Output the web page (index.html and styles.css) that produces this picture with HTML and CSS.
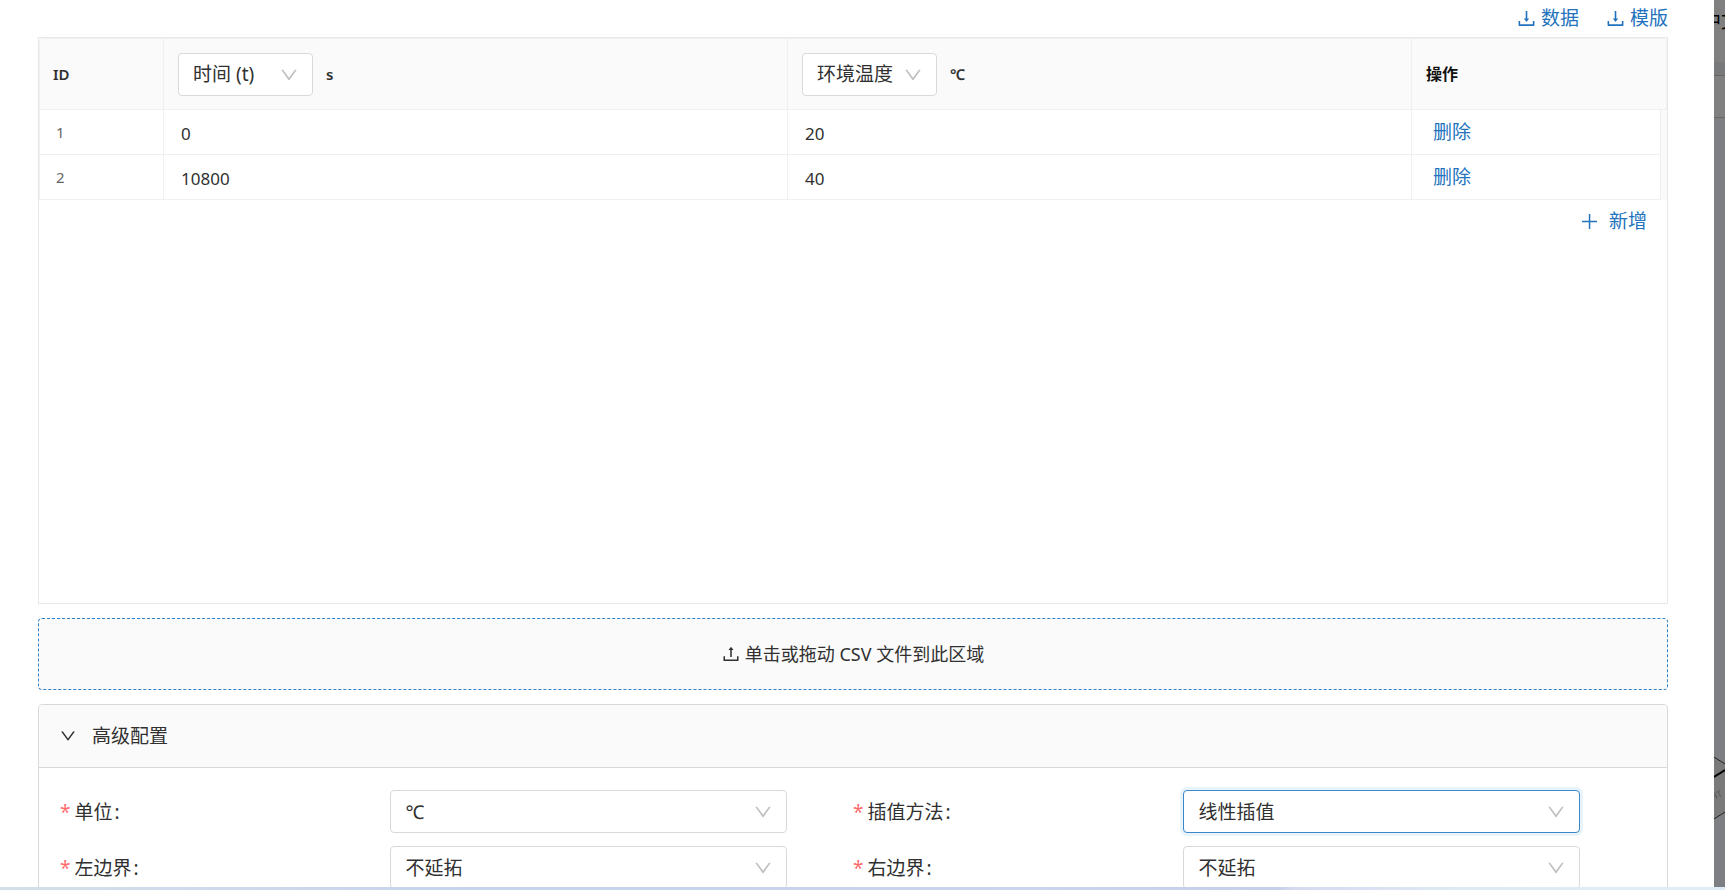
FILE: index.html
```html
<!DOCTYPE html>
<html lang="zh-CN">
<head>
<meta charset="utf-8">
<title>环境温度</title>
<link rel="stylesheet" href="styles.css">
</head>
<body>
<svg class="defs" aria-hidden="true">
  <symbol id="download" viewBox="64 64 896 896"><path d="M505.7 661a8 8 0 0012.6 0l112-141.7c4.1-5.2.4-12.9-6.3-12.9h-74.1V168c0-4.4-3.6-8-8-8h-60c-4.4 0-8 3.6-8 8v338.3H400c-6.7 0-10.4 7.7-6.3 12.9l112 141.8zM878 626h-60c-4.4 0-8 3.6-8 8v154H214V634c0-4.4-3.6-8-8-8h-60c-4.4 0-8 3.6-8 8v198c0 17.7 14.3 32 32 32h684c17.7 0 32-14.3 32-32V634c0-4.4-3.6-8-8-8z"/></symbol>
  <symbol id="upload" viewBox="64 64 896 896"><path d="M400 317.7h73.9V656c0 4.4 3.6 8 8 8h60c4.4 0 8-3.6 8-8V317.7H624c6.7 0 10.4-7.7 6.3-12.9L518.3 163a8 8 0 00-12.6 0l-112 141.7c-4.1 5.3-.4 13 6.3 13zM878 626h-60c-4.4 0-8 3.6-8 8v154H214V634c0-4.4-3.6-8-8-8h-60c-4.4 0-8 3.6-8 8v198c0 17.7 14.3 32 32 32h684c17.7 0 32-14.3 32-32V634c0-4.4-3.6-8-8-8z"/></symbol>
  <symbol id="down" viewBox="64 64 896 896"><path d="M884 256h-75c-5.1 0-9.9 2.5-12.9 6.6L512 654.2 227.9 262.6c-3-4.1-7.8-6.6-12.9-6.6h-75c-6.5 0-10.3 7.4-6.5 12.7l352.6 486.1c12.8 17.6 39 17.6 51.7 0l352.6-486.1c3.9-5.3.1-12.7-6.4-12.7z"/></symbol>
  <symbol id="plus" viewBox="0 0 17 17"><path d="M7.8 1h1.5v15H7.8z M1 7.8h15v1.5H1z"/></symbol>
</svg>
<div class="page">
  <main class="modal">
    <div class="links">
      <button type="button" class="link"><svg class="icon"><use href="#download"/></svg>数据</button>
      <button type="button" class="link"><svg class="icon"><use href="#download"/></svg>模版</button>
    </div>

    <section class="grid-box">
      <table class="data">
        <colgroup><col class="col-id"><col><col><col class="col-op"><col class="col-bar"></colgroup>
        <thead>
          <tr>
            <th>ID</th>
            <th>
              <div class="head">
                <span class="pick pick-small"><select aria-label="第一列变量"><option>时间 (t)</option></select><svg class="arrow"><use href="#down"/></svg></span>
                <span>s</span>
              </div>
            </th>
            <th>
              <div class="head">
                <span class="pick pick-small"><select aria-label="第二列变量"><option>环境温度</option></select><svg class="arrow"><use href="#down"/></svg></span>
                <span>℃</span>
              </div>
            </th>
            <th class="op-head" colspan="2">操作</th>
          </tr>
        </thead>
        <tbody>
          <tr>
            <td class="id">1</td>
            <td><input class="value" type="text" aria-label="时间 1" value="0"></td>
            <td><input class="value" type="text" aria-label="环境温度 1" value="20"></td>
            <td><button type="button" class="link remove">删除</button></td>
            <td class="bar"></td>
          </tr>
          <tr>
            <td class="id">2</td>
            <td><input class="value" type="text" aria-label="时间 2" value="10800"></td>
            <td><input class="value" type="text" aria-label="环境温度 2" value="40"></td>
            <td><button type="button" class="link remove">删除</button></td>
            <td class="bar"></td>
          </tr>
        </tbody>
      </table>
      <div class="add-row"><button type="button" class="link add"><svg class="icon-plus"><use href="#plus"/></svg>新增</button></div>
    </section>

    <button type="button" class="drop"><svg class="icon-up"><use href="#upload"/></svg>单击或拖动 CSV 文件到此区域</button>

    <section class="panel">
      <button type="button" class="panel-head" aria-expanded="true"><svg class="icon-fold"><use href="#down"/></svg>高级配置</button>
      <form class="form">
        <div class="field"><label for="unit">单位</label><span class="pick"><select id="unit"><option>℃</option></select><svg class="arrow"><use href="#down"/></svg></span></div>
        <div class="field"><label for="method">插值方法</label><span class="pick active"><select id="method"><option>线性插值</option></select><svg class="arrow"><use href="#down"/></svg></span></div>
        <div class="field"><label for="left">左边界</label><span class="pick"><select id="left"><option>不延拓</option></select><svg class="arrow"><use href="#down"/></svg></span></div>
        <div class="field"><label for="right">右边界</label><span class="pick"><select id="right"><option>不延拓</option></select><svg class="arrow"><use href="#down"/></svg></span></div>
      </form>
    </section>
  </main>
  <aside class="behind">
    <div class="behind-top"><span>中文</span></div>
    <div class="behind-gap"></div>
    <div class="behind-bar"></div>
    <svg class="cube" viewBox="0 0 11 70" aria-hidden="true">
      <path d="M0 7L11 14V62L0 69Z" fill="#7a7a7a"/>
      <path d="M0 7L11 14M0 69L11 62" stroke="#222" fill="none"/>
      <path d="M0 27L11 20" stroke="#000" stroke-width="2" fill="none"/>
      <text x="-2" y="50" font-size="9" fill="#555" transform="rotate(-25 0 50)">HT</text>
    </svg>
  </aside>
</div>
<div class="taskbar"></div>
</body>
</html>
```
FILE: styles.css
```css
* { box-sizing: border-box; }
body {
  margin: 0;
  height: 100vh;
  display: flex;
  flex-direction: column;
  overflow: hidden;
  background: #fff;
  color: #303030;
  font: 19px/28px "Noto Sans", "Noto Sans CJK SC", sans-serif;
}
button, input, select { font: inherit; color: inherit; margin: 0; }
svg { fill: currentColor; flex: none; }
.defs { display: none; }
.page { flex: 1; min-height: 0; display: flex; }
.modal { flex: 1; min-width: 0; overflow: hidden; padding: 4px 46px 0 38px; }

.link {
  display: inline-flex;
  align-items: center;
  gap: 5px;
  padding: 0;
  border: 0;
  background: none;
  color: #2272bd;
  cursor: pointer;
}
.links { display: flex; justify-content: flex-end; gap: 27px; height: 33px; align-items: flex-start; }
.icon { width: 19px; height: 19px; }

.grid-box { min-height: 567px; border: 1px solid #e8e8e8; }
.data { width: 100%; table-layout: fixed; border-collapse: separate; border-spacing: 0; border-top: 1px solid #f0f0f0; border-left: 1px solid #f0f0f0; border-radius: 4px 4px 0 0; }
.col-id { width: 124px; }
.col-op { width: 249px; }
.col-bar { width: 6px; }
.data th, .data td { border-right: 1px solid #f0f0f0; border-bottom: 1px solid #f0f0f0; text-align: left; vertical-align: middle; }
.data th { height: 71px; padding: 0 14px; background: #fafafa; font-size: 15px; font-weight: 600; }
.data th:first-child { padding-left: 13px; }
.data th.op-head { font-size: 16px; color: #111; }
.data td { height: 45px; padding: 0; }
.data td.id { padding-left: 16px; font-size: 15px; color: #666; }
.data td.bar { background: #fafafa; border-right: 0; border-bottom: 0; }
.head { display: flex; align-items: center; gap: 13px; }
.value { display: block; width: 100%; height: 40px; padding: 2px 17px 0; border: 0; background: none; outline: 0; font-size: 17px; }
.remove { display: flex; padding-left: 21px; }
.add-row { display: flex; justify-content: flex-end; padding: 7px 20px 0; }
.add { gap: 11px; }
.icon-plus { width: 17px; height: 17px; }

.pick { position: relative; display: block; }
.pick select {
  display: block;
  width: 100%;
  height: 43px;
  padding: 0 14px;
  border: 1px solid #d9d9d9;
  border-radius: 4px;
  background: #fff;
  appearance: none;
  outline: 0;
  font-weight: 400;
  font-size: 19px;
}
.pick-small { width: 135px; }
.pick.active select { border-color: #3a87c9; box-shadow: 0 0 0 3px #e8f3fa; }
.arrow { position: absolute; right: 15px; top: 13px; width: 18px; height: 18px; color: #bfbfbf; pointer-events: none; }

.drop {
  width: 100%;
  height: 72px;
  margin-top: 14px;
  display: flex;
  justify-content: center;
  align-items: center;
  gap: 5px;
  border: 1px dashed #2f80c6;
  border-radius: 4px;
  background: #fafafa;
  font-size: 18px;
}
.icon-up { width: 18px; height: 18px; }

.panel { margin-top: 14px; border: 1px solid #d9d9d9; border-radius: 4px; }
.panel-head {
  width: 100%;
  height: 63px;
  padding: 0 21px;
  display: flex;
  align-items: center;
  gap: 16px;
  border: 0;
  border-bottom: 1px solid #d9d9d9;
  border-radius: 4px 4px 0 0;
  background: #fafafa;
}
.icon-fold { width: 16px; height: 16px; }
.form { display: grid; grid-template-columns: 1fr 1fr; row-gap: 13px; padding: 22px 21px; }
.field { display: grid; grid-template-columns: 5fr 6fr 1fr; align-items: center; }
.field label::before { content: "*"; margin-right: 4px; color: #ff6b6d; }
.field label::after { content: ":"; margin-left: 2px; }

.behind { width: 11px; overflow: hidden; background: #7d7f82; display: flex; flex-direction: column; color: #000; }
.behind-top { height: 62px; background: #808080; padding-top: 7px; white-space: nowrap; }
.behind-top span { margin-left: -12px; }
.behind-gap { height: 14px; background: #77797b; border-bottom: 1px solid #666; }
.behind-bar { height: 42px; background: #808080; border-bottom: 1px solid #686868; }
.cube { width: 11px; height: 70px; margin-top: auto; margin-bottom: 67px; }
.taskbar { height: 3px; background: linear-gradient(90deg, #d3e0ea, #c5d3ec 28%, #c9d4ee 60%, #c5cfe8 74%, #d6daf0 75%, #dfeaf5 85%, #dfecf7); }
```
